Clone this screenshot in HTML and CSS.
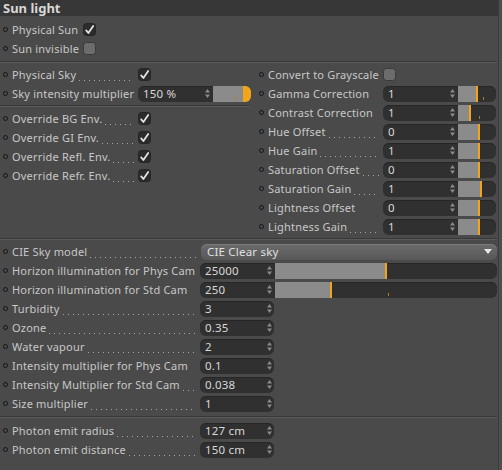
FILE: index.html
```html
<!DOCTYPE html>
<html lang="en">
  <head>
    <meta charset="UTF-8" />
    <title>Sun light</title>
    <link rel="stylesheet" href="styles.css">
  </head>
  <body>
    <div class="panel">
      <div class="head">Sun light</div>

      <div class="sec sec1">
        <div class="row">
          <span class="name"><i class="dot"></i>Physical Sun</span>
          <svg class="box" viewBox="0 0 13 13"><rect x="0.5" y="0.5" width="12" height="12" rx="3" class="on"/><path d="M3.2 7.4 L5.4 10 L10.2 3" class="tick"/></svg>
        </div>
        <div class="row">
          <span class="name"><i class="dot"></i>Sun invisible</span>
          <svg class="box" viewBox="0 0 13 13"><rect x="0.5" y="0.5" width="12" height="12" rx="3" class="off"/></svg>
        </div>
      </div>

      <div class="sep"></div>

      <div class="sec sec2">
        <div class="col left">
          <div class="row">
            <span class="name"><i class="dot"></i>Physical Sky<b class="lead"></b></span>
            <svg class="box" viewBox="0 0 13 13"><rect x="0.5" y="0.5" width="12" height="12" rx="3" class="on"/><path d="M3.2 7.4 L5.4 10 L10.2 3" class="tick"/></svg>
          </div>
          <div class="row">
            <span class="name"><i class="dot"></i>Sky intensity multiplier</span>
            <div class="field">
              <span class="num">150 %<svg class="spin" viewBox="0 0 5 9"><path d="M0 3.6 L2.5 0 L5 3.6Z M0 5.4 L2.5 9 L5 5.4Z"/></svg></span>
              <span class="slide"><i class="fill full" style="width: 100%"></i><i class="over"></i><i class="mark" style="left: 58%"></i></span>
            </div>
          </div>
          <div class="sep short"></div>
          <div class="row">
            <span class="name"><i class="dot"></i>Override BG Env.<b class="lead"></b></span>
            <svg class="box" viewBox="0 0 13 13"><rect x="0.5" y="0.5" width="12" height="12" rx="3" class="on"/><path d="M3.2 7.4 L5.4 10 L10.2 3" class="tick"/></svg>
          </div>
          <div class="row">
            <span class="name"><i class="dot"></i>Override GI Env.<b class="lead"></b></span>
            <svg class="box" viewBox="0 0 13 13"><rect x="0.5" y="0.5" width="12" height="12" rx="3" class="on"/><path d="M3.2 7.4 L5.4 10 L10.2 3" class="tick"/></svg>
          </div>
          <div class="row">
            <span class="name"><i class="dot"></i>Override Refl. Env.<b class="lead"></b></span>
            <svg class="box" viewBox="0 0 13 13"><rect x="0.5" y="0.5" width="12" height="12" rx="3" class="on"/><path d="M3.2 7.4 L5.4 10 L10.2 3" class="tick"/></svg>
          </div>
          <div class="row">
            <span class="name"><i class="dot"></i>Override Refr. Env.<b class="lead"></b></span>
            <svg class="box" viewBox="0 0 13 13"><rect x="0.5" y="0.5" width="12" height="12" rx="3" class="on"/><path d="M3.2 7.4 L5.4 10 L10.2 3" class="tick"/></svg>
          </div>
        </div>

        <div class="col right">
          <div class="row">
            <span class="name"><i class="dot"></i>Convert to Grayscale</span>
            <svg class="box" viewBox="0 0 13 13"><rect x="0.5" y="0.5" width="12" height="12" rx="3" class="off"/></svg>
          </div>
          <div class="row">
            <span class="name"><i class="dot"></i>Gamma Correction</span>
            <div class="field">
              <span class="num">1<svg class="spin" viewBox="0 0 5 9"><path d="M0 3.6 L2.5 0 L5 3.6Z M0 5.4 L2.5 9 L5 5.4Z"/></svg></span>
              <span class="slide"><i class="fill" style="width: 52%"></i><i class="mark" style="left: 66%"></i></span>
            </div>
          </div>
          <div class="row">
            <span class="name"><i class="dot"></i>Contrast Correction</span>
            <div class="field">
              <span class="num">1<svg class="spin" viewBox="0 0 5 9"><path d="M0 3.6 L2.5 0 L5 3.6Z M0 5.4 L2.5 9 L5 5.4Z"/></svg></span>
              <span class="slide"><i class="fill" style="width: 35%"></i><i class="mark" style="left: 55%"></i></span>
            </div>
          </div>
          <div class="row">
            <span class="name"><i class="dot"></i>Hue Offset<b class="lead"></b></span>
            <div class="field">
              <span class="num">0<svg class="spin" viewBox="0 0 5 9"><path d="M0 3.6 L2.5 0 L5 3.6Z M0 5.4 L2.5 9 L5 5.4Z"/></svg></span>
              <span class="slide"><i class="fill" style="width: 57%"></i></span>
            </div>
          </div>
          <div class="row">
            <span class="name"><i class="dot"></i>Hue Gain<b class="lead"></b></span>
            <div class="field">
              <span class="num">1<svg class="spin" viewBox="0 0 5 9"><path d="M0 3.6 L2.5 0 L5 3.6Z M0 5.4 L2.5 9 L5 5.4Z"/></svg></span>
              <span class="slide"><i class="fill" style="width: 57%"></i></span>
            </div>
          </div>
          <div class="row">
            <span class="name"><i class="dot"></i>Saturation Offset<b class="lead"></b></span>
            <div class="field">
              <span class="num">0<svg class="spin" viewBox="0 0 5 9"><path d="M0 3.6 L2.5 0 L5 3.6Z M0 5.4 L2.5 9 L5 5.4Z"/></svg></span>
              <span class="slide"><i class="fill" style="width: 57%"></i></span>
            </div>
          </div>
          <div class="row">
            <span class="name"><i class="dot"></i>Saturation Gain<b class="lead"></b></span>
            <div class="field">
              <span class="num">1<svg class="spin" viewBox="0 0 5 9"><path d="M0 3.6 L2.5 0 L5 3.6Z M0 5.4 L2.5 9 L5 5.4Z"/></svg></span>
              <span class="slide"><i class="fill" style="width: 62%"></i></span>
            </div>
          </div>
          <div class="row">
            <span class="name"><i class="dot"></i>Lightness Offset</span>
            <div class="field">
              <span class="num">0<svg class="spin" viewBox="0 0 5 9"><path d="M0 3.6 L2.5 0 L5 3.6Z M0 5.4 L2.5 9 L5 5.4Z"/></svg></span>
              <span class="slide"><i class="fill" style="width: 57%"></i></span>
            </div>
          </div>
          <div class="row">
            <span class="name"><i class="dot"></i>Lightness Gain<b class="lead"></b></span>
            <div class="field">
              <span class="num">1<svg class="spin" viewBox="0 0 5 9"><path d="M0 3.6 L2.5 0 L5 3.6Z M0 5.4 L2.5 9 L5 5.4Z"/></svg></span>
              <span class="slide"><i class="fill" style="width: 57%"></i></span>
            </div>
          </div>
        </div>
      </div>

      <div class="sep"></div>

      <div class="sec sec3">
        <div class="row">
          <span class="name"><i class="dot"></i>CIE Sky model<b class="lead"></b></span>
          <div class="select">CIE Clear sky<svg class="arrow" viewBox="0 0 8 5"><path d="M0 0 L8 0 L4 5Z"/></svg></div>
        </div>
        <div class="row">
          <span class="name"><i class="dot"></i>Horizon illumination for Phys Cam</span>
          <div class="field wide">
            <span class="num">25000<svg class="spin" viewBox="0 0 5 9"><path d="M0 3.6 L2.5 0 L5 3.6Z M0 5.4 L2.5 9 L5 5.4Z"/></svg></span>
            <span class="slide"><i class="fill" style="width: 50.5%"></i></span>
          </div>
        </div>
        <div class="row">
          <span class="name"><i class="dot"></i>Horizon illumination for Std Cam</span>
          <div class="field wide">
            <span class="num">250<svg class="spin" viewBox="0 0 5 9"><path d="M0 3.6 L2.5 0 L5 3.6Z M0 5.4 L2.5 9 L5 5.4Z"/></svg></span>
            <span class="slide"><i class="fill" style="width: 25.5%"></i><i class="mark" style="left: 50.8%"></i></span>
          </div>
        </div>
        <div class="row">
          <span class="name"><i class="dot"></i>Turbidity<b class="lead"></b></span>
          <div class="field"><span class="num">3<svg class="spin" viewBox="0 0 5 9"><path d="M0 3.6 L2.5 0 L5 3.6Z M0 5.4 L2.5 9 L5 5.4Z"/></svg></span></div>
        </div>
        <div class="row">
          <span class="name"><i class="dot"></i>Ozone<b class="lead"></b></span>
          <div class="field"><span class="num">0.35<svg class="spin" viewBox="0 0 5 9"><path d="M0 3.6 L2.5 0 L5 3.6Z M0 5.4 L2.5 9 L5 5.4Z"/></svg></span></div>
        </div>
        <div class="row">
          <span class="name"><i class="dot"></i>Water vapour<b class="lead"></b></span>
          <div class="field"><span class="num">2<svg class="spin" viewBox="0 0 5 9"><path d="M0 3.6 L2.5 0 L5 3.6Z M0 5.4 L2.5 9 L5 5.4Z"/></svg></span></div>
        </div>
        <div class="row">
          <span class="name"><i class="dot"></i>Intensity multiplier for Phys Cam</span>
          <div class="field"><span class="num">0.1<svg class="spin" viewBox="0 0 5 9"><path d="M0 3.6 L2.5 0 L5 3.6Z M0 5.4 L2.5 9 L5 5.4Z"/></svg></span></div>
        </div>
        <div class="row">
          <span class="name"><i class="dot"></i>Intensity Multiplier for Std Cam<b class="lead"></b></span>
          <div class="field"><span class="num">0.038<svg class="spin" viewBox="0 0 5 9"><path d="M0 3.6 L2.5 0 L5 3.6Z M0 5.4 L2.5 9 L5 5.4Z"/></svg></span></div>
        </div>
        <div class="row">
          <span class="name"><i class="dot"></i>Size multiplier<b class="lead"></b></span>
          <div class="field"><span class="num">1<svg class="spin" viewBox="0 0 5 9"><path d="M0 3.6 L2.5 0 L5 3.6Z M0 5.4 L2.5 9 L5 5.4Z"/></svg></span></div>
        </div>
      </div>

      <div class="sep"></div>

      <div class="sec sec4">
        <div class="row">
          <span class="name"><i class="dot"></i>Photon emit radius<b class="lead"></b></span>
          <div class="field"><span class="num">127 cm<svg class="spin" viewBox="0 0 5 9"><path d="M0 3.6 L2.5 0 L5 3.6Z M0 5.4 L2.5 9 L5 5.4Z"/></svg></span></div>
        </div>
        <div class="row">
          <span class="name"><i class="dot"></i>Photon emit distance<b class="lead"></b></span>
          <div class="field"><span class="num">150 cm<svg class="spin" viewBox="0 0 5 9"><path d="M0 3.6 L2.5 0 L5 3.6Z M0 5.4 L2.5 9 L5 5.4Z"/></svg></span></div>
        </div>
      </div>
    </div>
  </body>
</html>
```

FILE: styles.css
```css
* {
  margin: 0;
  padding: 0;
  box-sizing: border-box;
}
body {
  background: #4e4e4e;
  font-family: "Noto Sans", sans-serif;
  font-size: 11px;
  letter-spacing: 0.2px;
  color: #c8c8c8;
  overflow: hidden;
}
.panel {
  width: 499px;
  height: 470px;
  background: #4a4a4a;
  border-right: 1px solid #3c3c3c;
}
.head {
  height: 16px;
  line-height: 16px;
  padding-left: 3px;
  background: #373737;
  color: #d8d8d8;
  font-weight: bold;
  font-size: 13px;
  letter-spacing: 0;
}

.sec1 {
  padding: 4px 0 3px;
  --w: 80px;
}
.sec2 {
  display: grid;
  grid-template-columns: 256px 1fr;
  padding: 2px 0;
}
.left {
  --w: 135px;
}
.right {
  --w: 124px;
}
.sec3 {
  padding: 2px 0 3px;
  --w: 197px;
}
.sec4 {
  padding-top: 3px;
  --w: 197px;
}

.sep {
  height: 2px;
  border-top: 1px solid #383838;
  border-bottom: 1px solid #5a5a5a;
  margin-right: 1px;
}
.sep.short {
  margin: 2px 6px 2px 0;
}

.row {
  display: flex;
  align-items: center;
  height: 19px;
  padding-left: 3px;
}
.name {
  width: var(--w);
  flex: none;
  display: flex;
  align-items: center;
  white-space: nowrap;
  overflow: hidden;
}
.dot {
  width: 5px;
  height: 5px;
  margin-right: 4px;
  border: 1px solid #141414;
  border-radius: 50%;
  flex: none;
}
.lead {
  flex: 1;
  align-self: stretch;
  margin: 0 4px 0 3px;
  background: linear-gradient(to right, #a8a8a8 1px, transparent 1px) repeat-x;
  background-size: 5px 1px;
  background-position: 0 13px;
}

.box {
  width: 13px;
  height: 13px;
  flex: none;
}
.box .on {
  fill: #2b2b2b;
  stroke: #252525;
}
.box .off {
  fill: #6c6c6c;
  stroke: #3a3a3a;
}
.box .tick {
  fill: none;
  stroke: #e2e2e2;
  stroke-width: 1.8;
  stroke-linecap: round;
  stroke-linejoin: round;
}

.field {
  display: flex;
  height: 16px;
  width: 74px;
  border-radius: 6px;
  overflow: hidden;
  background: #303030;
  box-shadow: inset 0 1px 0 #262626;
  color: #d8d8d8;
  font-size: 11.5px;
}
.left .field,
.right .field {
  width: 113px;
}
.field.wide {
  width: 297px;
}
.num {
  width: 74px;
  flex: none;
  display: flex;
  align-items: center;
  justify-content: space-between;
  padding: 0 2px 0 5px;
  line-height: 16px;
}
.spin {
  width: 5px;
  height: 9px;
  fill: #8a8a8a;
}
.slide {
  flex: 1;
  position: relative;
  margin-left: 1px;
}
.fill {
  display: block;
  height: 100%;
  background: #8b8b8b;
  border-right: 2px solid #f3a418;
}
.fill.full {
  border-right: 0;
}
.over {
  position: absolute;
  top: 0;
  right: 0;
  bottom: 0;
  width: 8px;
  background: #f3a418;
}
.mark {
  position: absolute;
  bottom: 2px;
  width: 1px;
  height: 3px;
  background: #b07a20;
}

.select {
  display: flex;
  align-items: center;
  justify-content: space-between;
  width: 296px;
  height: 16px;
  margin-left: 1px;
  padding: 0 5px 0 6px;
  border-radius: 6px;
  background: linear-gradient(#6b6b6b, #585858);
  box-shadow: inset 0 1px 0 #7a7a7a;
  color: #e0e0e0;
  font-size: 11.5px;
}
.arrow {
  width: 8px;
  height: 5px;
  fill: #e8e8e8;
}
```
